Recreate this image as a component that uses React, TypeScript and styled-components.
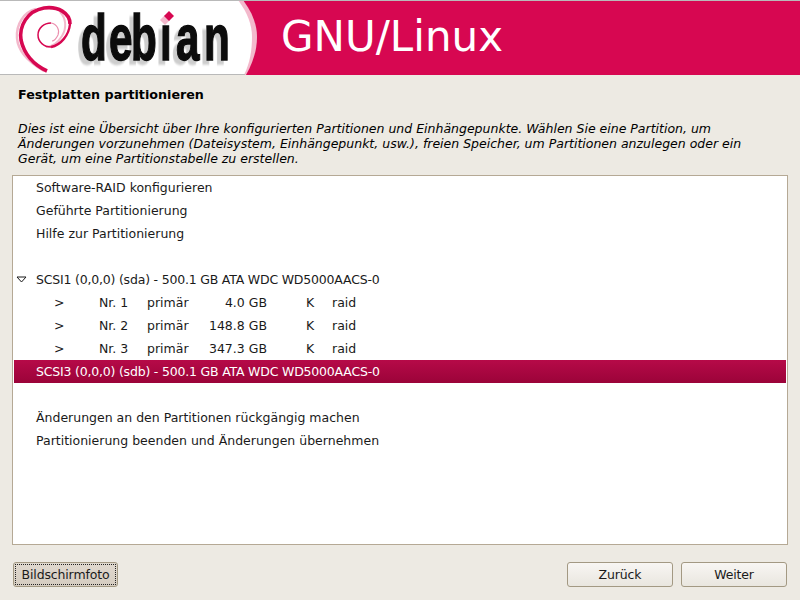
import * as React from 'react'
import styled, { createGlobalStyle } from 'styled-components'

const Global = createGlobalStyle`
    html, body {
        margin: 0;
        padding: 0;
        background: #edeae3;
    }
`

const Page = styled.div`
    width: 800px;
    height: 600px;
    display: flex;
    flex-direction: column;
    overflow: hidden;
    background: #edeae3;
    color: #000;
    font-family: "DejaVu Sans", sans-serif;
    font-size: 12.5px;
`

const Banner = styled.div`
    height: 75px;
    flex: none;
    display: flex;
    align-items: center;
    box-sizing: border-box;
    background: #d70751;
    border-top: 1px solid #b9b9b9;
`

const LogoBox = styled.svg`
    width: 258px;
    height: 74px;
    flex: none;
    display: block;
`

const LogoWord = styled.text`
    font-family: "Liberation Sans", sans-serif;
    font-weight: bold;
    font-size: 64px;
    fill: #0c0c0c;
    stroke: #0c0c0c;
    stroke-width: 1.4px;
    filter: drop-shadow(-6px 4px 1px #cdcdcd);
`

const BannerTitle = styled.div`
    margin-left: 23px;
    margin-top: -2px;
    color: #fff;
    font-size: 42px;
    line-height: 50px;
`

const Heading = styled.h1`
    margin: 12px 18px 0;
    font-size: 12.7px;
    line-height: 16px;
    font-weight: bold;
`

const Intro = styled.p`
    margin: 18px 18px 0;
    font-size: 12.5px;
    line-height: 15px;
    font-style: italic;
    white-space: nowrap;
`

const ListBox = styled.div`
    width: 776px;
    height: 370px;
    margin: 9px 0 0 12px;
    padding: 0 1px;
    box-sizing: border-box;
    border: 1px solid #b5a995;
    background: #fff;
`

const Row = styled.div<{ $selected?: boolean; $tight?: boolean }>`
    height: 23px;
    line-height: 23px;
    white-space: pre;
    padding-left: 22px;
    position: relative;
    letter-spacing: ${p => (p.$tight ? '-0.2px' : '0')};
    color: ${p => (p.$selected ? '#fff' : '#1a1a1a')};
    background: ${p => (p.$selected ? 'linear-gradient(#b60a48, #9b0339)' : 'transparent')};
`

const Disclosure = styled.svg`
    position: absolute;
    left: 2px;
    top: 8px;
    width: 11px;
    height: 7px;
`

const PartRow = styled.div`
    height: 23px;
    line-height: 23px;
    display: grid;
    grid-template-columns: 45px 48px 48px 72px 65px 1fr;
    padding-left: 40px;
    color: #1a1a1a;
`

const SizeCell = styled.span`
    text-align: right;
    white-space: pre;
`

const FlagCell = styled.span`
    padding-left: 39px;
`

const Footer = styled.div`
    display: flex;
    align-items: center;
    margin: 17px 13px 0 13px;
    gap: 8px;
`

const Button = styled.button<{ $focused?: boolean; $width: number }>`
    width: ${p => p.$width}px;
    height: 25px;
    padding: 0;
    position: relative;
    box-sizing: border-box;
    border: 1px solid #a39983;
    border-radius: 3px;
    color: #1a1a1a;
    font-family: inherit;
    font-size: 12.5px;
    letter-spacing: -0.15px;
    background: ${p => (p.$focused ? 'linear-gradient(#e0d9cf, #d5ccc0)' : 'linear-gradient(#f8f6f3, #e9e6df)')};
    &::after {
        content: '';
        display: ${p => (p.$focused ? 'block' : 'none')};
        position: absolute;
        inset: 1px;
        border: 1px dotted #222;
    }
`

const Spacer = styled.div`
    flex: 1;
`

const partitions = [
    { nr: 'Nr. 1', size: '4.0 GB' },
    { nr: 'Nr. 2', size: '148.8 GB' },
    { nr: 'Nr. 3', size: '347.3 GB' },
]

function Logo() {
    return (
        <LogoBox viewBox="0 1 258 74">
            <path d="M0 0H243C252 12 257 24 257 37C257 50 253 63 246 75H0Z" fill="#f3b9cc" />
            <path d="M0 0H238C247 12 252 24 252 37C252 50 250 63 244 75H0Z" fill="#fff" />
            <rect x="0" y="74" width="245" height="1" fill="#b9b9b9" />
            <path d="M44 71C30 63 18 52 17 38C16 24 24 12 36 9" fill="none" stroke="#f3b9cc" strokeWidth="2.5" />
            <path d="M60 12C66 18 67 28 62 36C57 44 52 47 46 47" fill="none" stroke="#f3b9cc" strokeWidth="2" />
            <path d="M47 71C34 65 24 54 21 40C19 26 27 11 44 8C58 6 70 13 70 24" fill="none" stroke="#d70751" strokeWidth="3.6" />
            <path d="M70 24C69 35 61 45 51 47" fill="none" stroke="#d70751" strokeWidth="2.4" />
            <path d="M51 47C44 47 38 42 38 35C38 28 44 23 51 23" fill="none" stroke="#d70751" strokeWidth="1.5" />
            <path d="M51 23C57 24 60 30 58 35C56 39 54 41 52 41" fill="none" stroke="#eb8fae" strokeWidth="1.1" />
            <g transform="scale(0.66 1)">
                <LogoWord x="122.7 165 198.5 242.4 266.7 309" y="60">debian</LogoWord>
            </g>
            <rect x="157" y="9" width="18" height="16" fill="#fff" />
            <path d="M160 20L165 15L170 20L165 25Z" fill="#f3b9cc" />
            <path d="M164 16L169 11L174 16L169 21Z" fill="#d70751" />
        </LogoBox>
    )
}

export default class App extends React.Component<{}, {}> {
    public render() {
        return <Page>
            <Global />
            <Banner>
                <Logo />
                <BannerTitle>GNU/Linux</BannerTitle>
            </Banner>
            <Heading>Festplatten partitionieren</Heading>
            <Intro>
                Dies ist eine Übersicht über Ihre konfigurierten Partitionen und Einhängepunkte. Wählen Sie eine Partition, um<br />
                Änderungen vorzunehmen (Dateisystem, Einhängepunkt, usw.), freien Speicher, um Partitionen anzulegen oder ein<br />
                Gerät, um eine Partitionstabelle zu erstellen.
            </Intro>
            <ListBox>
                <Row>Software-RAID konfigurieren</Row>
                <Row>Geführte Partitionierung</Row>
                <Row>Hilfe zur Partitionierung</Row>
                <Row />
                <Row $tight>
                    <Disclosure viewBox="0 0 11 7">
                        <path d="M1 1H10L5.5 6Z" fill="none" stroke="#1a1a1a" />
                    </Disclosure>
                    SCSI1 (0,0,0) (sda) - 500.1 GB ATA WDC WD5000AACS-0
                </Row>
                {partitions.map(p => (
                    <PartRow key={p.nr}>
                        <span>&gt;</span>
                        <span>{p.nr}</span>
                        <span>primär</span>
                        <SizeCell>{p.size}</SizeCell>
                        <FlagCell>K</FlagCell>
                        <span>raid</span>
                    </PartRow>
                ))}
                <Row $selected $tight>SCSI3 (0,0,0) (sdb) - 500.1 GB ATA WDC WD5000AACS-0</Row>
                <Row />
                <Row>Änderungen an den Partitionen rückgängig machen</Row>
                <Row>Partitionierung beenden und Änderungen übernehmen</Row>
            </ListBox>
            <Footer>
                <Button $focused $width={105}>Bildschirmfoto</Button>
                <Spacer />
                <Button $width={106}>Zurück</Button>
                <Button $width={106}>Weiter</Button>
            </Footer>
        </Page>
    }
}
